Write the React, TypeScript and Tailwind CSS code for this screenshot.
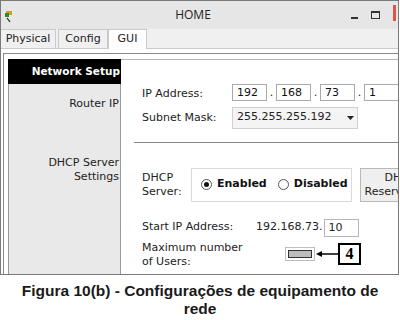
const ui = { fontFamily: '"DejaVu Sans", Verdana, sans-serif' };

function IpBox({ value }: { value: string }) {
  return (
    <div className="w-[35px] h-[17px] border border-[#a9a9a9] bg-white pl-[4px] text-[11px] leading-[15px] text-[#111]">
      {value}
    </div>
  );
}

function Radio({ checked, label }: { checked?: boolean; label: string }) {
  return (
    <div className="flex items-center gap-[5px]">
      <span className="w-[11px] h-[11px] rounded-full border border-[#555] bg-white flex items-center justify-center">
        {checked && <span className="w-[5px] h-[5px] rounded-full bg-[#111]" />}
      </span>
      <span className="font-bold text-[11px] text-[#111]">{label}</span>
    </div>
  );
}

function AppIcon() {
  return (
    <svg width="8" height="12" viewBox="0 0 8 12">
      <rect x="1" y="0" width="6" height="4" fill="#c9a227" />
      <rect x="0" y="2" width="4" height="4" fill="#2f8a2f" />
      <line x1="2" y1="7" x2="5" y2="11" stroke="#222" strokeWidth="1.2" />
    </svg>
  );
}

export default function App() {
  return (
    <div className="w-[400px] h-[320px] bg-white overflow-hidden">
      <div className="w-[399px] h-[275px] border border-[#7a7a7a] flex flex-col overflow-hidden" style={ui}>
        {/* title bar */}
        <div className="h-[28px] shrink-0 bg-[#e6e6e6] flex items-center">
          <div className="pl-[4px] pt-[4px]">
            <AppIcon />
          </div>
          <div className="flex-1 text-center pl-[22px] text-[12px] text-[#222]" style={{ fontFamily: '"Open Sans", sans-serif' }}>
            HOME
          </div>
          <div className="flex items-center gap-[13px] pr-[2px]">
            <span className="w-[7px] h-[2px] bg-[#333] mt-[6px]" />
            <span className="w-[9px] h-[8px] border border-[#333] border-t-2" />
            <span className="w-[3px] h-[16px] bg-[#d9534f] mb-[4px]" />
          </div>
        </div>

        {/* tabs */}
        <div className="h-[20px] shrink-0 bg-[#f0f0f0] border-b border-[#c9c9c9] flex items-end text-[11px] text-[#222]">
          <div className="h-[19px] w-[55px] border-r border-[#c9c9c9] border-t flex items-center justify-center">
            Physical
          </div>
          <div className="h-[19px] w-[50px] ml-[2px] border-x border-t border-[#c9c9c9] flex items-center justify-center">
            Config
          </div>
          <div className="h-[20px] w-[39px] bg-white border-x border-t border-[#c9c9c9] -mb-px flex items-center justify-center">
            GUI
          </div>
        </div>

        {/* content */}
        <div className="flex-1 min-h-0 bg-white flex flex-col pl-[2px] pt-[4px]">
          <div className="flex-1 border-l border-t border-[#8a8a8a] pl-[4px] pt-[5px] flex">
            {/* side menu */}
            <div className="w-[113px] shrink-0 flex flex-col">
              <div className="h-[25px] bg-black text-white font-bold text-[10.5px] flex items-center justify-end pr-[1px] whitespace-nowrap">
                Network Setup
              </div>
              <div className="flex-1 bg-[#e9e9e9] border-x border-[#9a9a9a] text-[11px] text-[#222] text-right pr-[1px] leading-[14px]">
                <div className="mt-[13px]">Router IP</div>
                <div className="mt-[45px]">
                  DHCP Server
                  <br />
                  Settings
                </div>
              </div>
            </div>

            {/* settings */}
            <div className="flex-1 min-w-0 border-t border-[#b5b5b5] text-[11px] text-[#222] pl-[21px] whitespace-nowrap">
              <div className="flex items-center mt-[23px]">
                <div className="w-[90px] shrink-0 mt-[3px]">IP Address:</div>
                <div className="flex items-end gap-[1px]">
                  <IpBox value="192" />
                  <span className="w-[7px] text-center">.</span>
                  <IpBox value="168" />
                  <span className="w-[7px] text-center">.</span>
                  <IpBox value="73" />
                  <span className="w-[7px] text-center">.</span>
                  <IpBox value="1" />
                </div>
              </div>
              <div className="flex items-center mt-[4px]">
                <div className="w-[90px] shrink-0 mt-[2px]">Subnet Mask:</div>
                <div className="w-[126px] h-[22px] border border-[#d0d0d0] bg-[#f4f4f4] flex items-center justify-between pl-[4px] pr-[3px]">
                  <span>255.255.255.192</span>
                  <svg width="7" height="4" viewBox="0 0 7 4">
                    <polygon points="0,0 7,0 3.5,4" fill="#222" />
                  </svg>
                </div>
              </div>

              <div className="h-px bg-[#888] mt-[13px] -ml-[8px]" />

              <div className="flex items-center mt-[25px]">
                <div className="w-[49px] shrink-0 leading-[14px] mt-[1px]">
                  DHCP
                  <br />
                  Server:
                </div>
                <div className="w-[161px] shrink-0 h-[34px] border border-[#dadada] flex items-center gap-[11px] pl-[9px]">
                  <Radio checked label="Enabled" />
                  <Radio label="Disabled" />
                </div>
                <div className="ml-[8px] w-[80px] h-[34px] shrink-0 border border-[#b9b9b9] bg-[#efefef] flex items-center justify-center text-center leading-[14px]">
                  DHCP
                  <br />
                  Reservations
                </div>
              </div>

              <div className="flex items-center mt-[17px]">
                <div className="w-[114px] shrink-0">Start IP Address:</div>
                <span>192.168.73.</span>
                <div className="ml-[2px] w-[35px] h-[18px] border border-[#b5b5b5] pl-[3px] leading-[16px]">10</div>
              </div>

              <div className="flex mt-[3px]">
                <div className="w-[143px] shrink-0 leading-[14px] mt-[1px]">
                  Maximum number
                  <br />
                  of Users:
                </div>
                <div className="flex items-center h-[22px] mt-[3px]">
                  <div className="w-[30px] h-[14px] border border-[#bdbdbd] p-[2px] bg-white">
                    <div className="w-full h-full bg-[#bdbdbd] border border-[#333]" />
                  </div>
                  <svg width="22" height="8" viewBox="0 0 22 8" className="ml-[1px]">
                    <polygon points="0,4 6,1 6,7" fill="#000" />
                    <line x1="5" y1="4" x2="22" y2="4" stroke="#000" strokeWidth="1.5" />
                  </svg>
                  <div
                    className="w-[23px] h-[22px] border-2 border-black bg-white flex items-center justify-center font-bold text-[16px] text-black"
                    style={{ fontFamily: '"Liberation Serif", serif' }}
                  >
                    4
                  </div>
                </div>
              </div>
            </div>
          </div>
        </div>
      </div>

      {/* caption */}
      <div
        className="text-center font-bold text-[15.5px] leading-[18px] text-[#1a1a1a] mt-[7px] whitespace-nowrap"
        style={{ fontFamily: '"Liberation Sans", Arial, sans-serif' }}
      >
        Figura 10(b) - Configurações de equipamento de
        <br />
        rede
      </div>
    </div>
  );
}
